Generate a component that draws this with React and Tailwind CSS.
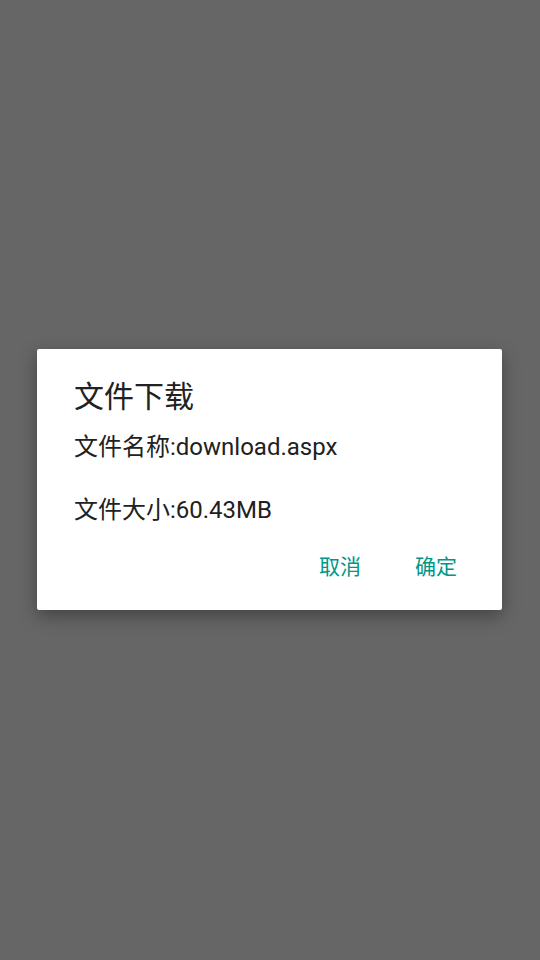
import React from 'react';

const font = { fontFamily: "Roboto, 'Noto Sans CJK SC', sans-serif" };

const App = () => {
  return (
    <div className="w-[540px] h-[960px] bg-[#666666] pt-[349px] pl-[37px]" style={font}>
      <div className="w-[465px] h-[261px] bg-white rounded-[2px] shadow-[0_6px_18px_rgba(0,0,0,0.35)] flex flex-col">
        <div className="pt-[28px] pl-[37px] text-[30px] leading-[40px] text-[#212121]">文件下载</div>
        <div className="pt-[14px] pl-[37px] text-[24px] leading-[32px] text-[#212121]">
          <div>文件名称:download.aspx</div>
          <div className="h-[31px]"></div>
          <div>文件大小:60.43MB</div>
        </div>
        <div className="flex justify-end items-center gap-[54px] pr-[45px] mt-[27px] text-[21px] leading-[28px] text-[#009688]">
          <span>取消</span>
          <span>确定</span>
        </div>
      </div>
    </div>
  );
};

export default App;
